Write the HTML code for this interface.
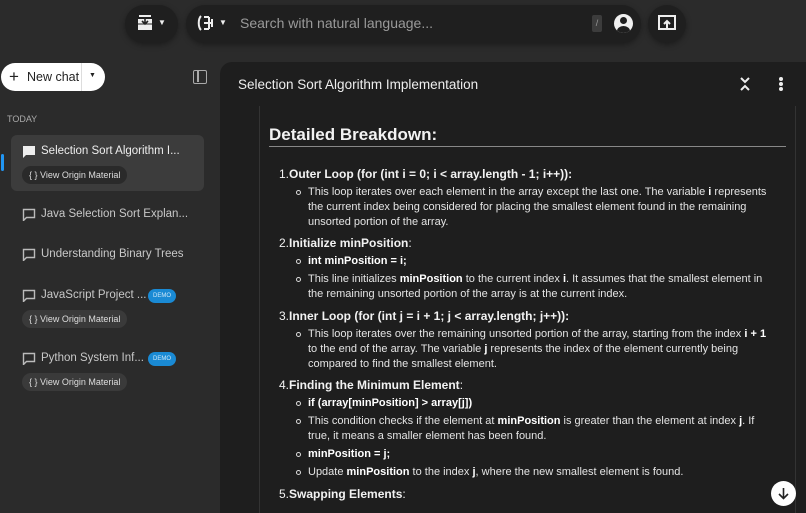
<!DOCTYPE html>
<html style="overflow:hidden;width:806px;height:513px"><head><meta charset="utf-8"><style>
*{margin:0;padding:0;box-sizing:border-box}
body{width:806px;height:513px;overflow:hidden;background:#2b2b2b;font-family:"Liberation Sans",sans-serif;color:#e6e6e6;position:relative}
.a{position:absolute;white-space:nowrap}
.pill{position:absolute;background:#1f1f1f;border-radius:22px;box-shadow:0 2px 6px rgba(0,0,0,.35)}
.t{font-size:11px;color:#e4e4e4}
.h{font-size:12px;font-weight:bold;color:#f2f2f2}
.bul{position:absolute;width:5px;height:5px;border:1px solid #ddd;border-radius:50%}
b{color:#fff}
.vom{position:absolute;background:#3a3a3a;border-radius:10px;font-size:9px;color:#ddd;padding:0 7px;height:18px;line-height:18px}
.ci{position:absolute;font-size:11.5px;color:#c8c8c8}
.demo{position:absolute;background:#1a8ad4;color:#cfe8f8;font-size:6px;border-radius:7px;width:28px;height:14px;line-height:14px;text-align:center}
</style></head><body>
<div class="pill" style="left:125px;top:5px;width:53px;height:38px"></div>
<svg class="a" style="left:135px;top:13px" width="20" height="20" viewBox="0 0 20 20"><path d="M3 6h14v11H3z" fill="#eee"/><path d="M4 2h12v2H4z" fill="#eee"/><path d="M10 4v6M7 8l3 3 3-3" stroke="#222" stroke-width="1.6" fill="none"/><path d="M3 11h14" stroke="#222"/></svg>
<div class="a" style="left:158px;top:18px;font-size:8px;color:#eee">▼</div>
<div class="pill" style="left:186px;top:5px;width:455px;height:38px"></div>
<svg class="a" style="left:196px;top:13px" width="20" height="20" viewBox="0 0 20 20"><path d="M5 3c-3 3-3 11 0 14M8 4h5M8 10h8M8 16h5M13 4v12M16 6v8" stroke="#eee" stroke-width="2" fill="none"/></svg>
<div class="a" style="left:219px;top:18px;font-size:8px;color:#eee">▼</div>
<div class="a" style="left:240px;top:15px;font-size:14px;color:#9a9a9a">Search with natural language...</div>
<div class="a" style="left:592px;top:15px;width:10px;height:17px;background:#3c3c3c;border-radius:2px;font-size:9px;color:#999;text-align:center;line-height:17px">/</div>
<div class="a" style="left:614px;top:14px;width:19px;height:19px;border-radius:50%;background:#f0f0f0;overflow:hidden"><div style="position:absolute;left:6px;top:3px;width:7px;height:7px;border-radius:50%;background:#1f1f1f"></div><div style="position:absolute;left:3px;top:12px;width:13px;height:10px;border-radius:50%;background:#1f1f1f"></div></div>
<div class="pill" style="left:648px;top:5px;width:38px;height:38px"></div>
<svg class="a" style="left:658px;top:15px" width="18" height="16" viewBox="0 0 18 16"><rect x="1" y="1" width="16" height="13" fill="none" stroke="#eee" stroke-width="2"/><path d="M9 13V6M6 9l3-3 3 3" stroke="#eee" stroke-width="2" fill="none"/></svg>
<div class="a" style="left:1px;top:63px;width:104px;height:28px;background:#fff;border-radius:14px"></div>
<div class="a" style="left:9px;top:67px;font-size:17px;color:#222">+</div>
<div class="a" style="left:27px;top:70px;font-size:12.5px;color:#222">New chat</div>
<div class="a" style="left:81px;top:63px;width:1px;height:28px;background:#ddd"></div>
<div class="a" style="left:89px;top:72px;font-size:7px;color:#222">▼</div>
<div class="a" style="left:193px;top:70px;width:14px;height:14px;border:1.5px solid #aaa;border-radius:2px"><div style="position:absolute;left:3px;top:0;width:1.5px;height:11px;background:#aaa"></div></div>
<div class="a" style="left:7px;top:114px;font-size:9px;color:#aaa">TODAY</div>
<div class="a" style="left:11px;top:135px;width:193px;height:56px;background:#3c3c3c;border-radius:6px"></div>
<div class="a" style="left:1px;top:154px;width:3px;height:17px;background:#2196f3;border-radius:2px"></div>
<svg class="a" style="left:22px;top:145px" width="14" height="13" viewBox="0 0 14 13"><path d="M1 1h12v9H4l-3 3z" fill="#eee"/></svg>
<div class="ci" style="left:41px;top:145px;color:#eee">Selection Sort Algorithm I...</div>
<div class="vom" style="left:22px;top:166px;background:#2a2a2a">{ } View Origin Material</div>
<svg class="a" style="left:22px;top:208px" width="14" height="13" viewBox="0 0 14 13"><path d="M1.5 1.5h11v8h-8l-3 3z" fill="none" stroke="#bbb" stroke-width="1.4"/></svg>
<div class="ci" style="left:41px;top:208px">Java Selection Sort Explan...</div>
<svg class="a" style="left:22px;top:248px" width="14" height="13" viewBox="0 0 14 13"><path d="M1.5 1.5h11v8h-8l-3 3z" fill="none" stroke="#bbb" stroke-width="1.4"/></svg>
<div class="ci" style="left:41px;top:248px">Understanding Binary Trees</div>
<svg class="a" style="left:22px;top:289px" width="14" height="13" viewBox="0 0 14 13"><path d="M1.5 1.5h11v8h-8l-3 3z" fill="none" stroke="#bbb" stroke-width="1.4"/></svg>
<div class="ci" style="left:41px;top:289px">JavaScript Project ...</div>
<div class="demo" style="left:148px;top:289px">DEMO</div>
<div class="vom" style="left:22px;top:310px">{ } View Origin Material</div>
<svg class="a" style="left:22px;top:352px" width="14" height="13" viewBox="0 0 14 13"><path d="M1.5 1.5h11v8h-8l-3 3z" fill="none" stroke="#bbb" stroke-width="1.4"/></svg>
<div class="ci" style="left:41px;top:352px">Python System Inf...</div>
<div class="demo" style="left:148px;top:352px">DEMO</div>
<div class="vom" style="left:22px;top:373px">{ } View Origin Material</div>
<div class="a" style="left:220px;top:62px;width:586px;height:451px;background:#1e1e1e;border-radius:12px 0 0 0"></div>
<div class="a" style="left:238px;top:77px;font-size:13.5px;color:#eee">Selection Sort Algorithm Implementation</div>
<svg class="a" style="left:739px;top:76px" width="12" height="16" viewBox="0 0 12 16"><path d="M2 2l4 4 4-4M2 14l4-4 4 4" stroke="#eee" stroke-width="2" fill="none"/></svg>
<div class="a" style="left:779px;top:77px;width:4px;height:4px;border-radius:50%;background:#eee;box-shadow:0 5px 0 #eee,0 10px 0 #eee"></div>
<div class="a" style="left:259px;top:106px;width:1px;height:407px;background:#333"></div>
<div class="a" style="left:795px;top:106px;width:1px;height:407px;background:#333"></div>
<div class="a" style="left:269px;top:125px;font-size:17px;font-weight:bold;color:#f2f2f2">Detailed Breakdown:</div>
<div class="a" style="left:269px;top:146px;width:517px;height:1px;background:#888"></div>

<div class="a h" style="left:279px;top:167px"><span style="font-weight:normal">1.</span>Outer Loop (for (int i = 0; i &lt; array.length - 1; i++)):</div>
<div class="bul" style="left:296px;top:190px"></div>
<div class="a t" style="left:308px;top:186px">This loop iterates over each element in the array except the last one. The variable <b>i</b> represents</div>
<div class="a t" style="left:308px;top:201px">the current index being considered for placing the smallest element found in the remaining</div>
<div class="a t" style="left:308px;top:216px">unsorted portion of the array.</div>
<div class="a h" style="left:279px;top:236px"><span style="font-weight:normal">2.</span>Initialize minPosition<span style="font-weight:normal">:</span></div>
<div class="bul" style="left:296px;top:259px"></div>
<div class="a t" style="left:308px;top:255px"><b>int minPosition = i;</b></div>
<div class="bul" style="left:296px;top:277px"></div>
<div class="a t" style="left:308px;top:273px">This line initializes <b>minPosition</b> to the current index <b>i</b>. It assumes that the smallest element in</div>
<div class="a t" style="left:308px;top:288px">the remaining unsorted portion of the array is at the current index.</div>
<div class="a h" style="left:279px;top:309px"><span style="font-weight:normal">3.</span>Inner Loop (for (int j = i + 1; j &lt; array.length; j++)):</div>
<div class="bul" style="left:296px;top:332px"></div>
<div class="a t" style="left:308px;top:328px">This loop iterates over the remaining unsorted portion of the array, starting from the index <b>i + 1</b></div>
<div class="a t" style="left:308px;top:343px">to the end of the array. The variable <b>j</b> represents the index of the element currently being</div>
<div class="a t" style="left:308px;top:358px">compared to find the smallest element.</div>
<div class="a h" style="left:279px;top:378px"><span style="font-weight:normal">4.</span>Finding the Minimum Element<span style="font-weight:normal">:</span></div>
<div class="bul" style="left:296px;top:401px"></div>
<div class="a t" style="left:308px;top:397px"><b>if (array[minPosition] &gt; array[j])</b></div>
<div class="bul" style="left:296px;top:419px"></div>
<div class="a t" style="left:308px;top:415px">This condition checks if the element at <b>minPosition</b> is greater than the element at index <b>j</b>. If</div>
<div class="a t" style="left:308px;top:430px">true, it means a smaller element has been found.</div>
<div class="bul" style="left:296px;top:452px"></div>
<div class="a t" style="left:308px;top:448px"><b>minPosition = j;</b></div>
<div class="bul" style="left:296px;top:470px"></div>
<div class="a t" style="left:308px;top:466px">Update <b>minPosition</b> to the index <b>j</b>, where the new smallest element is found.</div>
<div class="a h" style="left:279px;top:487px"><span style="font-weight:normal">5.</span>Swapping Elements<span style="font-weight:normal">:</span></div>
<div class="a" style="left:771px;top:481px;width:25px;height:25px;border-radius:50%;background:#fff"></div>
<svg class="a" style="left:777px;top:487px" width="13" height="13" viewBox="0 0 13 13"><path d="M6.5 1v10M2 7l4.5 4.5L11 7" stroke="#222" stroke-width="1.6" fill="none"/></svg>
</body></html>
